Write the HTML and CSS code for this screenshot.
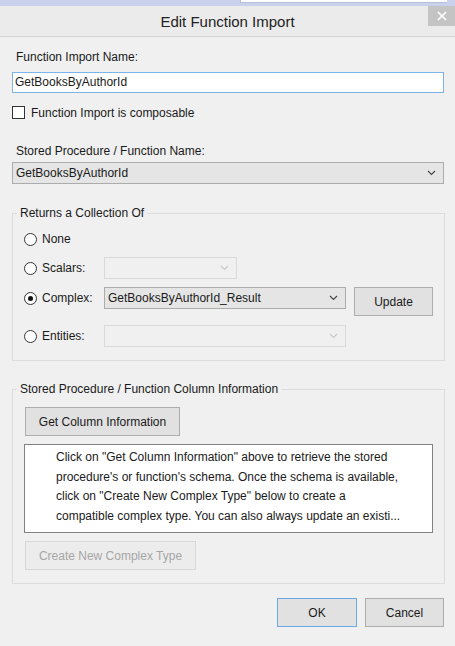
FILE: index.html
```html
<!DOCTYPE html>
<html>
<head>
<meta charset="utf-8">
<link rel="stylesheet" href="styles.css">
</head>
<body>
<div class="top"><div class="top-white"></div></div>
<div class="titlebar">
  <span class="title">Edit Function Import</span>
  <div class="close"><svg width="10" height="10" viewBox="0 0 10 10"><path d="M1 1L9 9M9 1L1 9" stroke="#fff" stroke-width="1.6"/></svg></div>
</div>
<div class="content">
  <div class="label l1">Function Import Name:</div>
  <div class="input">GetBooksByAuthorId</div>
  <div class="check"><span class="box"></span><span>Function Import is composable</span></div>
  <div class="label l2">Stored Procedure / Function Name:</div>
  <div class="select main"><span>GetBooksByAuthorId</span><svg class="chev" width="9" height="6" viewBox="0 0 9 6"><path d="M1 1L4.5 4.5L8 1" fill="none" stroke="#444" stroke-width="1.1"/></svg></div>

  <fieldset class="group g1">
    <legend>Returns a Collection Of</legend>
    <div class="row r1"><div class="opt"><span class="radio"></span><span>None</span></div></div>
    <div class="row r2"><div class="opt"><span class="radio"></span><span>Scalars:</span></div>
      <div class="select dis w-s"><span></span><svg class="chev" width="9" height="6" viewBox="0 0 9 6"><path d="M1 1L4.5 4.5L8 1" fill="none" stroke="#c8c8c8" stroke-width="1.1"/></svg></div></div>
    <div class="row r3"><div class="opt"><span class="radio on"><span class="dot"></span></span><span>Complex:</span></div>
      <div class="select w-l"><span>GetBooksByAuthorId_Result</span><svg class="chev" width="9" height="6" viewBox="0 0 9 6"><path d="M1 1L4.5 4.5L8 1" fill="none" stroke="#444" stroke-width="1.1"/></svg></div>
      <div class="btn update">Update</div></div>
    <div class="row r4"><div class="opt"><span class="radio"></span><span>Entities:</span></div>
      <div class="select dis w-l"><span></span><svg class="chev" width="9" height="6" viewBox="0 0 9 6"><path d="M1 1L4.5 4.5L8 1" fill="none" stroke="#c8c8c8" stroke-width="1.1"/></svg></div></div>
  </fieldset>

  <fieldset class="group g2">
    <legend>Stored Procedure / Function Column Information</legend>
    <div class="btn getcol">Get Column Information</div>
    <div class="textbox">Click on "Get Column Information" above to retrieve the stored<br>procedure's or function's schema. Once the schema is available,<br>click on "Create New Complex Type" below to create a<br>compatible complex type. You can also always update an existi...</div>
    <div class="btn disabled create">Create New Complex Type</div>
  </fieldset>

  <div class="actions">
    <div class="btn ok">OK</div>
    <div class="btn cancel">Cancel</div>
  </div>
</div>
</body>
</html>
```

FILE: styles.css
```css
* { box-sizing: border-box; }
html, body { margin: 0; padding: 0; }
body {
  width: 455px;
  height: 646px;
  background: #f0f0f0;
  font-family: "Liberation Sans", Arial, sans-serif;
  font-size: 12px;
  color: #1a1a1a;
  overflow: hidden;
}
.top {
  height: 6px;
  background: #c9d1ec;
  display: flex;
}
.top-white {
  margin-left: 240px;
  width: 207px;
  height: 3px;
  background: #fff;
  border-left: 1px solid #b9bfd4;
  border-bottom: 1px solid #b9bfd4;
}
.titlebar {
  position: relative;
  height: 31px;
  background: #ebebeb;
  border-bottom: 1px solid #d6d6d6;
  display: flex;
  align-items: center;
  justify-content: center;
}
.title {
  font-size: 15px;
  color: #222;
  margin-top: 1px;
}
.close {
  position: absolute;
  right: 0;
  top: 0;
  width: 27px;
  height: 20px;
  background: #c4c4c4;
  display: flex;
  align-items: center;
  justify-content: center;
}
.content {
  padding: 0 11px 0 12px;
}
.label {
  height: 16px;
  line-height: 16px;
  padding-left: 4px;
}
.l1 { margin-top: 12px; }
.l2 { margin-top: 24px; }
.input {
  margin-top: 7px;
  height: 21px;
  border: 1px solid #7eb4ea;
  background: #fff;
  line-height: 19px;
  padding-left: 2px;
}
.check {
  margin-top: 13px;
  height: 13px;
  display: flex;
  align-items: center;
}
.box {
  width: 13px;
  height: 13px;
  border: 1px solid #333;
  background: #fff;
  margin-right: 6px;
}
.select {
  height: 22px;
  border: 1px solid #acacac;
  background: #e5e5e5;
  display: flex;
  align-items: center;
  justify-content: space-between;
  padding: 0 7px 0 3px;
}
.select.main { margin-top: 3px; }
.select.dis {
  background: #f0f0f0;
  border-color: #d9d9d9;
}
.chev { flex: none; }
.w-s { width: 133px; }
.w-l { width: 242px; }
.group {
  margin: 0;
  border: 1px solid #dcdcdc;
  padding: 0 11px 13px 11px;
}
.group legend {
  padding: 0 3px;
  margin-left: -7px;
  line-height: 16px;
  height: 16px;
}
.g1 { margin-top: 21px; padding-top: 8px; }
.g2 { margin-top: 20px; padding-top: 10px; padding-bottom: 13px; }
.row {
  display: flex;
  align-items: center;
}
.r1 { height: 20px; }
.r2 { height: 22px; margin-top: 8px; }
.r3 { height: 29px; margin-top: 8px; align-items: flex-start; }
.r3 .opt { height: 22px; }
.r4 { height: 22px; margin-top: 9px; }
.opt {
  width: 80px;
  flex: none;
  display: flex;
  align-items: center;
}
.radio {
  width: 13px;
  height: 13px;
  border-radius: 50%;
  border: 1px solid #333;
  background: #fff;
  margin-right: 5px;
  display: flex;
  align-items: center;
  justify-content: center;
}
.dot {
  width: 5px;
  height: 5px;
  border-radius: 50%;
  background: #111;
}
.btn {
  height: 29px;
  border: 1px solid #adadad;
  background: #e1e1e1;
  display: flex;
  align-items: center;
  justify-content: center;
}
.update { width: 79px; margin-left: 8px; }
.getcol { width: 155px; margin-left: 1px; }
.textbox {
  margin-top: 8px;
  width: 409px;
  height: 89px;
  background: #fff;
  border: 1px solid #828282;
  padding: 3px 0 0 31px;
  line-height: 19.7px;
  white-space: nowrap;
  overflow: hidden;
}
.create { width: 171px; margin-top: 8px; margin-left: 1px; }
.btn.disabled {
  background: #ececec;
  border-color: #d7d7d7;
  color: #a6a6a6;
}
.actions {
  margin-top: 14px;
  display: flex;
  justify-content: flex-end;
  gap: 8px;
}
.ok { width: 80px; border-color: #6aa9e6; }
.cancel { width: 79px; }
```
